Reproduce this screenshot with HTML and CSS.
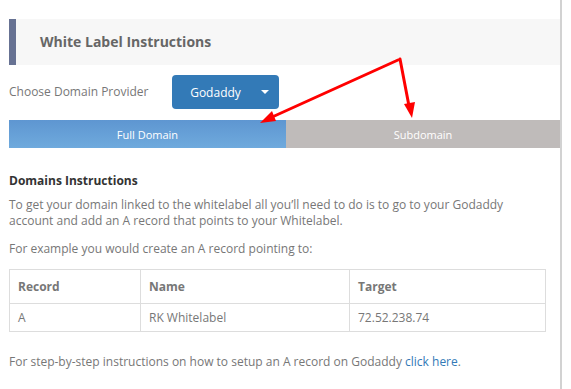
FILE: index.html
```html
<!DOCTYPE html>
<html>
<head>
<meta charset="utf-8">
<link rel="stylesheet" href="styles.css">
</head>
<body>
<div class="page">
  <div class="panel-head"><h2 class="panel-title">White Label Instructions</h2></div>
  <div class="provider-row">
    <span class="provider-label">Choose Domain Provider</span>
    <button class="provider-btn"><span class="btn-text">Godaddy</span><span class="caret"></span></button>
  </div>
  <div class="tabs">
    <div class="tab tab-active">Full Domain</div>
    <div class="tab tab-inactive">Subdomain</div>
  </div>
  <div class="content">
    <h3 class="section-title">Domains Instructions</h3>
    <p class="text">To get your domain linked to the whitelabel all you’ll need to do is to go to your Godaddy account and add an A record that points to your Whitelabel.</p>
    <p class="text">For example you would create an A record pointing to:</p>
    <table class="records">
      <thead>
        <tr><th class="c1">Record</th><th class="c2">Name</th><th class="c3">Target</th></tr>
      </thead>
      <tbody>
        <tr><td>A</td><td>RK Whitelabel</td><td>72.52.238.74</td></tr>
      </tbody>
    </table>
    <p class="text footer-text">For step-by-step instructions on how to setup an A record on Godaddy <a class="link" href="#">click here</a>.</p>
  </div>
</div>
<svg class="arrows" width="571" height="389" viewBox="0 0 571 389">
  <line x1="398" y1="60" x2="270" y2="118" stroke="#ff0000" stroke-width="3" stroke-linecap="round"/>
  <polygon points="260,123 272,111 276,121" fill="#ff0000"/>
  <line x1="400" y1="59" x2="409" y2="106" stroke="#ff0000" stroke-width="3" stroke-linecap="round"/>
  <polygon points="412,118 404,104 415,102" fill="#ff0000"/>
</svg>
</body>
</html>
```
FILE: styles.css
```css
html, body {
  margin: 0;
  padding: 0;
  background: #fff;
}
body {
  font-family: "Open Sans", "Liberation Sans", sans-serif;
  font-size: 12px;
  color: #777;
  position: relative;
  width: 571px;
  height: 389px;
  overflow: hidden;
}
.page {
  width: 551px;
  margin-left: 9px;
  padding-top: 19px;
  height: 370px;
  border-right: 2px solid #d2d2d2;
}
.panel-head {
  height: 46px;
  background: #f7f7f7;
  border-left: 7px solid #677293;
  display: flex;
  align-items: center;
  padding-left: 24px;
}
.panel-title {
  margin: 0;
  font-size: 14px;
  font-weight: 700;
  color: #666;
  position: relative;
  top: -1px;
}
.provider-row {
  display: flex;
  align-items: center;
  height: 34px;
  margin-top: 10px;
}
.provider-label {
  width: 163px;
  color: #777;
  position: relative;
  top: -1px;
}
.provider-btn {
  width: 107px;
  height: 34px;
  background: #337ab7;
  border: none;
  border-radius: 4px;
  color: #fff;
  font-family: inherit;
  font-size: 12px;
  display: flex;
  align-items: center;
  padding: 0;
}
.btn-text {
  width: 87px;
  text-align: center;
}
.caret {
  width: 0;
  height: 0;
  border-left: 4px solid transparent;
  border-right: 4px solid transparent;
  border-top: 4px solid #fff;
  margin-left: 2px;
}
.tabs {
  display: flex;
  margin-top: 11px;
  height: 28px;
}
.tab {
  display: flex;
  align-items: center;
  justify-content: center;
  color: #fff;
  font-size: 11px;
}
.tab-active {
  width: 277px;
  background: linear-gradient(#5e96d1, #6faadd);
}
.tab-inactive {
  flex: 1;
  background: #bfbbba;
}
.content {
  width: 537px;
  padding-top: 24px;
}
.section-title {
  margin: 0 0 8px;
  font-size: 12px;
  font-weight: 700;
  color: #333;
}
.text {
  margin: 0 0 12px;
  line-height: 16px;
  color: #777;
}
.records {
  width: 537px;
  border-collapse: collapse;
  margin-top: 11px;
}
.records th, .records td {
  border: 1px solid #ddd;
  text-align: left;
  padding: 0 0 0 8px;
  color: #777;
  font-size: 12px;
}
.records th {
  height: 33px;
  font-weight: 700;
}
.records td {
  height: 27px;
}
.c1 { width: 122px; }
.c2 { width: 200px; }
.footer-text {
  margin-top: 22px;
}
.link {
  color: #337ab7;
  text-decoration: none;
}
.arrows {
  position: absolute;
  left: 0;
  top: 0;
  pointer-events: none;
}
```
